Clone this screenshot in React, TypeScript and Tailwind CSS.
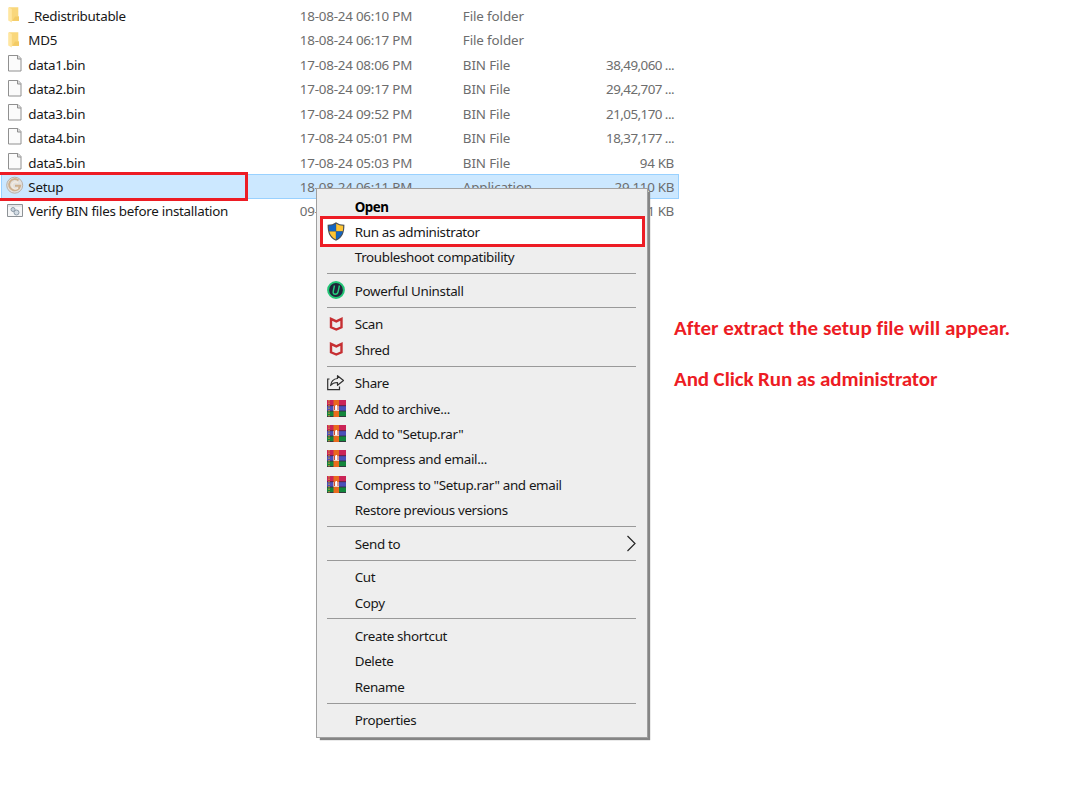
import { Fragment, type ReactNode } from 'react';

type FileKind = 'folder' | 'file' | 'setup' | 'batch';

interface FileRow {
  name: string;
  kind: FileKind;
  modified: string;
  type: string;
  size: string;
  selected?: boolean;
}

interface MenuItem {
  label: string;
  icon?: ReactNode;
  bold?: boolean;
  highlighted?: boolean;
  submenu?: boolean;
}

const files: FileRow[] = [
  { name: '_Redistributable', kind: 'folder', modified: '18-08-24 06:10 PM', type: 'File folder', size: '' },
  { name: 'MD5', kind: 'folder', modified: '18-08-24 06:17 PM', type: 'File folder', size: '' },
  { name: 'data1.bin', kind: 'file', modified: '17-08-24 08:06 PM', type: 'BIN File', size: '38,49,060 ...' },
  { name: 'data2.bin', kind: 'file', modified: '17-08-24 09:17 PM', type: 'BIN File', size: '29,42,707 ...' },
  { name: 'data3.bin', kind: 'file', modified: '17-08-24 09:52 PM', type: 'BIN File', size: '21,05,170 ...' },
  { name: 'data4.bin', kind: 'file', modified: '17-08-24 05:01 PM', type: 'BIN File', size: '18,37,177 ...' },
  { name: 'data5.bin', kind: 'file', modified: '17-08-24 05:03 PM', type: 'BIN File', size: '94 KB' },
  { name: 'Setup', kind: 'setup', modified: '18-08-24 06:11 PM', type: 'Application', size: '29,110 KB', selected: true },
  { name: 'Verify BIN files before installation', kind: 'batch', modified: '09-', type: '', size: '1 KB' },
];

function FileIcon({ kind }: { kind: FileKind }) {
  if (kind === 'folder') {
    return (
      <svg width="20" height="20" viewBox="0 0 20 20">
        <path d="M3 2.200h9.300v9.300H13v4.500H4z" fill="#f9d77c" />
        <path d="M2.200 2.200 5.800 4v13.500l-3.600-2z" fill="#ffe6a0" />
        <path d="M9 11.500h4v4.300H6.500z" fill="#f3cb66" />
      </svg>
    );
  }
  if (kind === 'file') {
    return (
      <svg width="20" height="20" viewBox="0 0 20 20">
        <path d="M2.500 1.500h9.500l3 3v12.500H2.500z" fill="#fbfbfb" stroke="#909090" />
        <path d="M11.500 1.500v3.500H15" fill="#dddddd" stroke="#909090" />
      </svg>
    );
  }
  if (kind === 'setup') {
    return (
      <svg width="20" height="20" viewBox="0 0 20 20" fill="none">
        <circle cx="8.700" cy="9.200" r="8" fill="#e2e0dc" stroke="#b9b1a8" />
        <path d="M12.500 4.500A5.600 5.600 0 1 0 14.200 9.800H9" stroke="#cdb08e" strokeWidth="1.900" />
        <path d="M12 7A3.500 3.500 0 1 0 12 12" stroke="#f5ebdf" strokeWidth="1.200" />
      </svg>
    );
  }
  return (
    <svg width="20" height="20" viewBox="0 0 20 20" fill="none">
      <path d="M1.500 3.500H16.500v12H1.500z" fill="#f5f6f7" stroke="#8d9296" />
      <path d="M2 5h14" stroke="#d5d8da" />
      <circle cx="7" cy="8.500" r="2" fill="#c9d3dc" stroke="#8d9ba8" />
      <circle cx="10.500" cy="11.500" r="2.500" fill="#d3dce4" stroke="#8d9ba8" />
    </svg>
  );
}

function ShieldIcon() {
  return (
    <svg width="18" height="19" viewBox="0 0 18 19">
      <path d="M9 .2c2.200 1.700 5 2.500 8.400 2.500 0 7.500-1.500 12.800-8.400 16.100C2.100 15.500.6 10.200.6 2.700 4 2.700 6.800 1.900 9 .2z" fill="#4b5157" />
      <path d="M8.800 1.700v7.500H2.200c-.3-1.700-.4-3.400-.4-5.400C4.500 3.600 6.800 2.900 8.800 1.700z" fill="#1265c4" />
      <path d="M9.200 1.700c2 1.200 4.300 1.900 7 2.100 0 2-.1 3.700-.4 5.400H9.200z" fill="#ffc533" />
      <path d="M2.300 9.500h6.500v8C5.200 15.600 3.200 13 2.300 9.500z" fill="#ffc533" />
      <path d="M9.200 9.500h6.500c-.9 3.500-2.900 6.100-6.500 8z" fill="#1265c4" />
    </svg>
  );
}

function UninstallIcon() {
  return (
    <svg width="18" height="18" viewBox="0 0 18 18" fill="none">
      <circle cx="9" cy="9" r="7.900" fill="#20243a" stroke="#22c776" strokeWidth="2" />
      <path d="M7.500 4.500 6.300 10c-.5 2.200.2 3.300 1.900 3.300s2.600-.9 3-3l1.200-5.800" stroke="#25cf7d" strokeWidth="1.400" />
    </svg>
  );
}

function McAfeeIcon() {
  return (
    <svg width="18" height="18" viewBox="0 0 18 18" fill="none">
      <path d="M4 3.800 9.300 6.300l5.200-2.500v8.500l-5.200 2.200L4 12.300z" stroke="#c62f32" strokeWidth="2.400" />
    </svg>
  );
}

function ShareIcon() {
  return (
    <svg width="18" height="18" viewBox="0 0 18 18" fill="none" stroke="#303030" strokeWidth="1.200">
      <path d="M2.500 5H.7v10.700h11.800V12.500" />
      <path d="M10.500 1.700 16.500 6.500l-6 4.800V8.500C7.400 8.400 5.200 9.400 3.600 11.500c.5-4.200 2.800-6.600 6.900-7z" strokeLinejoin="round" />
    </svg>
  );
}

function RarIcon() {
  return (
    <svg width="19" height="17" viewBox="0 0 19 17">
      <path d="M0 0h19v6H0z" fill="#ca2457" />
      <path d="M0 6h19v5H0z" fill="#4a4fb9" />
      <path d="M0 11h19v6H0z" fill="#12863c" />
      <path d="M0 5.700h19M0 11h19M0 16.500h19" stroke="#3d243f" strokeWidth=".8" />
      <path d="M2 0v17" stroke="#d6a13a" strokeWidth="1.200" strokeDasharray="1.500 1" />
      <path d="M6.500 0h5.500v17H6.500z" fill="#e96a1e" />
      <path d="M6.500 6h5.500v4.800H6.500z" fill="#f0ece8" />
      <path d="M7.500 6v4M11 6v4" stroke="#cf4a31" strokeWidth="1" />
      <path d="M9.300 5v5" stroke="#fff" strokeWidth="1.500" />
    </svg>
  );
}

const menuGroups: MenuItem[][] = [
  [
    { label: 'Open', bold: true },
    { label: 'Run as administrator', icon: <ShieldIcon />, highlighted: true },
    { label: 'Troubleshoot compatibility' },
  ],
  [{ label: 'Powerful Uninstall', icon: <UninstallIcon /> }],
  [
    { label: 'Scan', icon: <McAfeeIcon /> },
    { label: 'Shred', icon: <McAfeeIcon /> },
  ],
  [
    { label: 'Share', icon: <ShareIcon /> },
    { label: 'Add to archive...', icon: <RarIcon /> },
    { label: 'Add to "Setup.rar"', icon: <RarIcon /> },
    { label: 'Compress and email...', icon: <RarIcon /> },
    { label: 'Compress to "Setup.rar" and email', icon: <RarIcon /> },
    { label: 'Restore previous versions' },
  ],
  [{ label: 'Send to', submenu: true }],
  [{ label: 'Cut' }, { label: 'Copy' }],
  [{ label: 'Create shortcut' }, { label: 'Delete' }, { label: 'Rename' }],
  [{ label: 'Properties' }],
];

function FileList() {
  return (
    <div className="w-[679px] shrink-0 pt-[3px] pl-px">
      {files.map((file) => (
        <div
          key={file.name}
          className={`relative flex h-[24.450px] items-center pl-[5px] text-[#6d6d6d] ${
            file.selected ? 'bg-[#cce8ff] outline outline-1 -outline-offset-1 outline-[#99d1ff]' : ''
          }`}
        >
          {file.selected && (
            <span className="absolute -top-[2.500px] -left-px h-[29px] w-[248px] border-y-[3px] border-r-[3px] border-[#ed1c24]" />
          )}
          <div className="w-[22.300px] shrink-0">
            <FileIcon kind={file.kind} />
          </div>
          <span className="w-[271.500px] shrink-0 pt-[1.500px] tracking-[-0.270px] text-[#171717]">{file.name}</span>
          <span className="w-[163px] shrink-0 pt-[1.500px] tracking-[-0.220px]">{file.modified}</span>
          <span className="w-[100px] shrink-0 pt-[1.500px] tracking-[-0.120px]">{file.type}</span>
          <span
            className={`flex-1 pt-[1.500px] pr-[5px] text-right ${
              file.size.endsWith('KB') ? '' : 'tracking-[-0.550px]'
            }`}
          >
            {file.size}
          </span>
        </div>
      ))}
    </div>
  );
}

function ContextMenu() {
  return (
    <div className="absolute top-[188px] left-[316px] h-[550px] w-[332px] border border-[#a0a0a0] bg-[#eeeeee] pt-[4.500px] text-[#171717] shadow-[3px_3px_1px_-1px_#858585]">
      {menuGroups.map((group, index) => (
        <Fragment key={group[0].label}>
          {index > 0 && (
            <div className="flex h-[8.100px] items-center pr-[11px] pl-[10px]">
              <div className="h-px flex-1 bg-[#999999]" />
            </div>
          )}
          {group.map((item) => (
            <div key={item.label} className="relative flex h-[25.400px] items-center pl-[10.300px]">
              {item.highlighted && (
                <span className="absolute -top-[2.500px] left-[3px] h-[31px] w-[325px] border-[3px] border-[#ed1c24] bg-white" />
              )}
              <div className="relative flex w-[27.400px] shrink-0">{item.icon}</div>
              <span
                className={`relative flex-1 pt-[.8px] ${item.bold ? 'font-bold tracking-[-0.500px] text-black' : ''}`}
              >
                {item.label}
              </span>
              {item.submenu && (
                <svg width="10" height="17" viewBox="0 0 10 17" className="mr-[11px]" fill="none">
                  <path d="m1.500 1 7.500 7.500-7.500 7.500" stroke="#252525" strokeWidth="1.200" />
                </svg>
              )}
            </div>
          ))}
        </Fragment>
      ))}
    </div>
  );
}

export default function App() {
  return (
    <div className="relative flex h-[800px] w-[1067px] overflow-hidden bg-white font-['Noto_Sans','Open_Sans',sans-serif] text-[13.400px] leading-5 tracking-[-0.330px] whitespace-nowrap">
      <FileList />
      <div className="-ml-[5px] flex flex-col gap-[25px] pt-[315px] font-['Carlito','Lato',sans-serif] text-[21px] leading-[26px] font-bold tracking-[0.030px] text-[#ed1c24]">
        <p>After extract the setup file will appear.</p>
        <p className="tracking-[-0.100px]">And Click Run as administrator</p>
      </div>
      <ContextMenu />
    </div>
  );
}
